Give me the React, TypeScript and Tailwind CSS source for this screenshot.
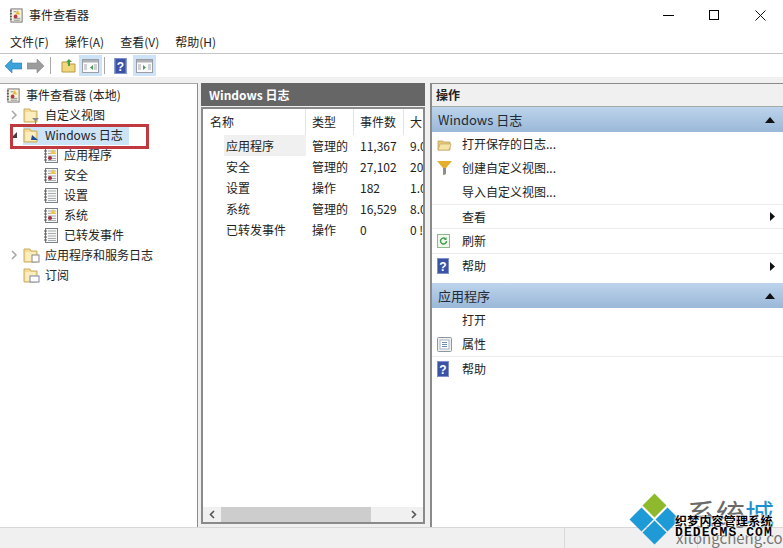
// 事件查看器 窗口
import { ReactNode } from 'react';

const FONT = 'font-["Noto_Sans_CJK_SC","Liberation_Sans",sans-serif]';

function AppIcon({ size = 16 }: { size?: number }) {
  return (
    <svg width={size} height={size} viewBox="0 0 16 16">
      <rect x="2" y="1" width="12" height="14" fill="#f6f1dc" stroke="#6f6f78" />
      <path d="M1 3h2M1 6h2M1 9h2M1 12h2" stroke="#555" strokeWidth="1.2" />
      <path d="M5 11h7M5 13h7M5 4h3" stroke="#8a8a92" />
      <path d="M9 2l3 5H7z" fill="#e9bb3a" />
      <circle cx="7" cy="9" r="2" fill="#b23a48" />
    </svg>
  );
}

function LogIcon({ warn }: { warn?: boolean }) {
  return (
    <svg width="14" height="15" viewBox="0 0 14 15">
      <rect x="1.5" y="0.5" width="12" height="14" fill="#f7f7f4" stroke="#77808a" />
      <path d="M0 3h3M0 6h3M0 9h3M0 12h3" stroke="#555" />
      <path d="M4 3h8M4 5.5h8M4 8h8M4 10.5h8M4 12.5h8" stroke="#a3abb3" />
      {warn && <path d="M9 1l3 5H6z" fill="#efc64c" />}
      {warn && <circle cx="6" cy="10" r="2" fill="#a5303f" />}
    </svg>
  );
}

function FolderIcon({ badge }: { badge?: ReactNode }) {
  return (
    <svg width="18" height="18" viewBox="0 0 18 18">
      <path d="M1 3h6l1 2h6v11H1z" fill="#f4dc94" stroke="#c9ad62" />
      <rect x="2.5" y="6" width="10" height="9" fill="#fbeebc" />
      {badge}
    </svg>
  );
}

function HelpIcon({ w = 12, h = 16 }: { w?: number; h?: number }) {
  return (
    <svg width={w} height={h} viewBox="0 0 12 16">
      <rect width="12" height="16" fill="#3b53a4" />
      <rect x="0.5" y="0.5" width="11" height="15" fill="none" stroke="#7f90cc" />
      <text x="6" y="12.5" textAnchor="middle" fontSize="12" fontWeight="700" fill="#fff" fontFamily="Liberation Sans">?</text>
    </svg>
  );
}

function PanelIcon({ flip }: { flip?: boolean }) {
  return (
    <svg width="17" height="14" viewBox="0 0 17 14">
      <rect x="0.5" y="0.5" width="16" height="13" fill="#fbfbfb" stroke="#9a9ea4" />
      <rect x="1" y="1" width="15" height="2.5" fill="#aeb2b6" />
      <path d={flip ? 'M7 6l3 2.5L7 11z' : 'M11 6L8 8.5l3 2.5z'} fill="#4a9c58" />
      <path d="M2 6h3M2 8h3M2 10h3M12 6h3M12 8h3M12 10h3" stroke="#a4a8ae" />
    </svg>
  );
}

function TreeRow({ indent, chevron, icon, children, selected }: { indent: string; chevron?: 'right' | 'open'; icon: ReactNode; children: ReactNode; selected?: boolean }) {
  return (
    <div className={`flex h-5 items-center ${indent}`}>
      <span className="flex w-[18px] shrink-0 items-center justify-center">
        {chevron === 'right' && (
          <svg width="7" height="10" viewBox="0 0 7 10"><path d="M1 1l4 4-4 4" fill="none" stroke="#a6a6a6" strokeWidth="1.5" /></svg>
        )}
        {chevron === 'open' && (
          <svg width="8" height="8" viewBox="0 0 8 8"><path d="M7 1v6H1z" fill="#404040" /></svg>
        )}
      </span>
      <span className={`flex h-5 items-center ${selected ? 'bg-[#cde3f7]' : ''}`}>
        <span className="mr-[4px] flex w-[18px] shrink-0 items-center justify-center">{icon}</span>
        <span className="pr-[6px] text-[12px] text-[#222]">{children}</span>
      </span>
    </div>
  );
}

const columns = [
  { name: '应用程序', type: '管理的', count: '11,367', size: '9.0' },
  { name: '安全', type: '管理的', count: '27,102', size: '20' },
  { name: '设置', type: '操作', count: '182', size: '1.0' },
  { name: '系统', type: '管理的', count: '16,529', size: '8.0' },
  { name: '已转发事件', type: '操作', count: '0', size: '0 !' },
];

function SectionHeader({ title }: { title: string }) {
  return (
    <div className="flex h-[25px] items-center justify-between bg-gradient-to-b from-[#bdd4ec] to-[#9ab8d8] pl-[6px] pr-[8px] text-[13px] text-[#1f2a36]">
      <span>{title}</span>
      <svg width="10" height="6" viewBox="0 0 10 6"><path d="M5 0l5 6H0z" fill="#111" /></svg>
    </div>
  );
}

function ActionRow({ icon, children, arrow, line, h = 'h-6' }: { icon?: ReactNode; children: ReactNode; arrow?: boolean; line?: boolean; h?: string }) {
  return (
    <div className={`flex ${h} items-center pr-[8px] ${line ? 'border-t border-[#ececec]' : ''}`}>
      <span className="flex w-[30px] shrink-0 items-center pl-[5px]">{icon}</span>
      <span className="flex-1 text-[12px] text-[#222]">{children}</span>
      {arrow && <svg width="5" height="9" viewBox="0 0 5 9"><path d="M0 0l5 4.5L0 9z" fill="#111" /></svg>}
    </div>
  );
}

export default function App() {
  return (
    <div className={`relative flex h-[548px] w-[783px] flex-col overflow-hidden bg-white ${FONT}`}>
      {/* 标题栏 */}
      <div className="flex h-[30px] items-center justify-between pl-[9px]">
        <div className="flex items-center gap-[5px]">
          <AppIcon size={15} />
          <span className="text-[12px] text-[#222]">事件查看器</span>
        </div>
        <div className="flex items-center">
          <span className="flex w-[46px] justify-center"><span className="block h-px w-[11px] bg-black" /></span>
          <span className="flex w-[46px] justify-center"><span className="block h-[10px] w-[10px] border border-black" /></span>
          <span className="flex w-[46px] justify-center">
            <svg width="11" height="11" viewBox="0 0 11 11"><path d="M0.5 0.5l10 10M10.5 0.5l-10 10" stroke="#111" /></svg>
          </span>
        </div>
      </div>

      {/* 菜单栏 */}
      <div className="flex h-[24px] items-center gap-[16px] border-b border-[#c4c4c4] pl-[10px] text-[12px] text-[#222]">
        <span>文件(F)</span>
        <span>操作(A)</span>
        <span>查看(V)</span>
        <span>帮助(H)</span>
      </div>

      {/* 工具栏 */}
      <div className="flex h-[23px] items-center pl-[5px]">
        <svg width="17" height="14" viewBox="0 0 17 14"><path d="M0 7l7-7v4h10v6H7v4z" fill="#3ba2dc" stroke="#2a7fb5" strokeWidth="0.6" /></svg>
        <svg className="ml-[5px]" width="17" height="14" viewBox="0 0 17 14"><path d="M17 7l-7-7v4H0v6h10v4z" fill="#9c9c9c" stroke="#888" strokeWidth="0.6" /></svg>
        <span className="ml-[6px] h-[17px] w-px bg-[#a8a8a8]" />
        <span className="ml-[9px] flex w-4 justify-center">
          <svg width="15" height="15" viewBox="0 0 15 15">
            <path d="M1 4h5l1 2h7v8H1z" fill="#f0d77c" stroke="#b79b45" />
            <path d="M8 1l3 3H9v4H7V4H5z" fill="#4a9f3f" />
          </svg>
        </span>
        <span className="ml-[3px] flex h-[21px] w-[23px] items-center justify-center bg-[#cde3f7]"><PanelIcon /></span>
        <span className="ml-[2px] h-[17px] w-px bg-[#a8a8a8]" />
        <span className="ml-[9px] flex w-[13px] justify-center"><HelpIcon w={13} h={16} /></span>
        <span className="ml-[6px] flex h-[21px] w-[23px] items-center justify-center bg-[#cde3f7]"><PanelIcon flip /></span>
      </div>

      {/* 窗格区 */}
      <div className="flex min-h-0 flex-1 bg-[#f0f0f0] pt-[6px]">
        {/* 左侧树 */}
        <div className="w-[198px] shrink-0 border-r border-[#8c8c8c] border-t border-t-[#a8a8a8] bg-white pt-[1px]">
          <div className="flex h-5 items-center pl-[6px]">
            <AppIcon size={15} />
            <span className="ml-[5px] text-[12px] text-[#222]">事件查看器 (本地)</span>
          </div>
          <TreeRow indent="pl-[5px]" chevron="right" icon={<FolderIcon badge={<path d="M9 12h7l-3 3v3h-1v-3z" fill="#8a8a8a" />} />}>自定义视图</TreeRow>
          <TreeRow indent="pl-[5px]" chevron="open" selected icon={<FolderIcon badge={<path d="M9 9l6 5H8z" fill="#1f4e9c" />} />}>Windows 日志</TreeRow>
          <TreeRow indent="pl-[24px]" icon={<LogIcon warn />}>应用程序</TreeRow>
          <TreeRow indent="pl-[24px]" icon={<LogIcon warn />}>安全</TreeRow>
          <TreeRow indent="pl-[24px]" icon={<LogIcon />}>设置</TreeRow>
          <TreeRow indent="pl-[24px]" icon={<LogIcon warn />}>系统</TreeRow>
          <TreeRow indent="pl-[24px]" icon={<LogIcon />}>已转发事件</TreeRow>
          <TreeRow indent="pl-[5px]" chevron="right" icon={<FolderIcon badge={<rect x="9" y="9" width="7" height="7" fill="#fff" stroke="#888" />} />}>应用程序和服务日志</TreeRow>
          <TreeRow indent="pl-[5px]" icon={<FolderIcon badge={<rect x="7" y="10" width="9" height="6" fill="#fff" stroke="#7a86a8" />} />}>订阅</TreeRow>
        </div>

        {/* 中间列表 */}
        <div className="ml-[3px] flex w-[224px] shrink-0 flex-col pb-[3px]">
          <div className="flex h-[23px] items-center bg-[#666666] pl-[8px] text-[12px] font-bold text-white">Windows 日志</div>
          <div className="mt-px flex min-h-0 flex-1 flex-col border-2 border-[#8a8a8a] bg-white">
            <div className="flex h-[26px] items-center text-[12px] text-[#222]">
              <span className="flex h-full w-[103px] items-center border-r border-[#e4e4e4] pl-[7px]">名称</span>
              <span className="flex h-full w-[48px] items-center border-r border-[#e4e4e4] pl-[6px]">类型</span>
              <span className="flex h-full w-[50px] items-center border-r border-[#e4e4e4] pl-[6px]">事件数</span>
              <span className="pl-[6px]">大</span>
            </div>
            <div className="flex-1 overflow-hidden">
              {columns.map((row, i) => (
                <div key={row.name} className="flex h-[21px] items-center text-[12px] text-[#222]">
                  <span className={`ml-[21px] flex h-full w-[82px] items-center pl-[2px] ${i === 0 ? 'bg-[#f0f0f0]' : ''}`}>{row.name}</span>
                  <span className="w-[48px] pl-[6px]">{row.type}</span>
                  <span className="w-[50px] pl-[6px]">{row.count}</span>
                  <span className="w-[19px] overflow-hidden whitespace-nowrap pl-[6px]">{row.size}</span>
                </div>
              ))}
            </div>
            <div className="flex h-[15px] items-center bg-[#f0f0f0]">
              <span className="flex w-[18px] justify-center">
                <svg width="6" height="9" viewBox="0 0 6 9"><path d="M5 1L1.5 4.5 5 8" fill="none" stroke="#555" strokeWidth="1.6" /></svg>
              </span>
              <span className="h-full w-[150px] bg-[#cdcdcd]" />
              <span className="flex-1" />
              <span className="flex w-[18px] justify-center">
                <svg width="6" height="9" viewBox="0 0 6 9"><path d="M1 1l3.5 3.5L1 8" fill="none" stroke="#555" strokeWidth="1.6" /></svg>
              </span>
            </div>
          </div>
        </div>

        {/* 右侧操作 */}
        <div className="ml-[5px] min-w-0 flex-1 border-l-2 border-[#8a8a8a] bg-white">
          <div className="flex h-[24px] items-center border-y border-t-[#8a8a8a] border-b-[#a8a8a8] bg-[#f0f0f0] pl-[4px] text-[12px] font-bold text-[#222]">操作</div>
          <SectionHeader title="Windows 日志" />
          <ActionRow icon={
            <svg width="15" height="13" viewBox="0 0 15 13"><path d="M1 3h5l1 1h6v8H1z" fill="#e8c878" stroke="#b69a55" strokeWidth="0.7" /><path d="M1 12l2-6h11l-2 6z" fill="#f6e3a6" stroke="#c2a65f" strokeWidth="0.7" /></svg>
          }>打开保存的日志...</ActionRow>
          <ActionRow icon={
            <svg width="15" height="14" viewBox="0 0 15 14"><path d="M0 0h15L9 7v6l-3 1V7z" fill="#e6ae2e" /><path d="M6 7h3v6l-3 1z" fill="#8e8e8e" /></svg>
          }>创建自定义视图...</ActionRow>
          <ActionRow>导入自定义视图...</ActionRow>
          <ActionRow line arrow>查看</ActionRow>
          <ActionRow line h="h-[25px]" icon={
            <svg width="13" height="14" viewBox="0 0 13 14"><rect x="0.5" y="0.5" width="12" height="13" fill="#f0f8ee" stroke="#8dbb8a" /><path d="M9.5 7a3 3 0 1 1-1-2.2" fill="none" stroke="#3f9a4a" strokeWidth="1.4" /><path d="M9.5 3v3H7z" fill="#3f9a4a" /></svg>
          }>刷新</ActionRow>
          <ActionRow line arrow h="h-[25px]" icon={<HelpIcon />}>帮助</ActionRow>
          <div className="h-[5px]" />
          <SectionHeader title="应用程序" />
          <ActionRow>打开</ActionRow>
          <ActionRow icon={
            <svg width="15" height="15" viewBox="0 0 15 15"><rect x="0.5" y="0.5" width="14" height="14" rx="1" fill="#eef0f2" stroke="#8f969e" /><rect x="3" y="3" width="9" height="9" fill="#fff" stroke="#a7b4c2" /><path d="M5 5.5h5M5 7.5h5M5 9.5h5" stroke="#6d8db0" /></svg>
          }>属性</ActionRow>
          <ActionRow line h="h-[25px]" icon={<HelpIcon />}>帮助</ActionRow>
        </div>
      </div>

      {/* 状态栏 */}
      <div className="flex h-[21px] shrink-0 border-t border-[#d8d8d8] bg-[#f0f0f0]">
        <span className="ml-[564px] h-full w-px bg-[#d8d8d8]" />
        <span className="ml-[132px] h-full w-px bg-[#d8d8d8]" />
      </div>

      {/* 红色标注框 */}
      <div className="absolute left-[10px] top-[124px] h-[25px] w-[139px] border-[3px] border-[#c0393f]" />

      {/* 水印 */}
      <div className="absolute left-[630px] top-[493px] h-[55px] w-[153px]">
        <span className="absolute left-[16px] top-[4px] h-[17px] w-[17px] rotate-45 bg-[#8fb92c]" />
        <span className="absolute left-[3px] top-[18px] h-[17px] w-[17px] rotate-45 bg-[#1e9ad6]" />
        <span className="absolute left-[29px] top-[18px] h-[17px] w-[17px] rotate-45 bg-[#1e9ad6]" />
        <span className="absolute left-[16px] top-[31px] h-[17px] w-[17px] rotate-45 bg-[#1e9ad6]" />
        <span className="absolute left-[57px] top-[3px] text-[29px] leading-[34px] text-[#6a6a6a]">系统<span className="text-[#1e8fd0]">城</span></span>
        <span className="absolute left-[46px] top-[36px] whitespace-nowrap text-[15px] leading-[18px] text-[#777]">xitongcheng.com</span>
        <span className="absolute left-[45px] top-[20px] whitespace-nowrap text-[12px] font-bold leading-[16px] tracking-[0.2px] text-black [text-shadow:0_0_2px_#fff,0_0_2px_#fff,0_0_2px_#fff]">织梦内容管理系统</span>
        <span className="absolute left-[45px] top-[32px] whitespace-nowrap font-['Liberation_Mono',monospace] text-[13px] font-bold leading-[16px] tracking-[1.1px] text-black [text-shadow:0_0_2px_#fff,0_0_2px_#fff,0_0_2px_#fff]">DEDECMS.COM</span>
      </div>
    </div>
  );
}
